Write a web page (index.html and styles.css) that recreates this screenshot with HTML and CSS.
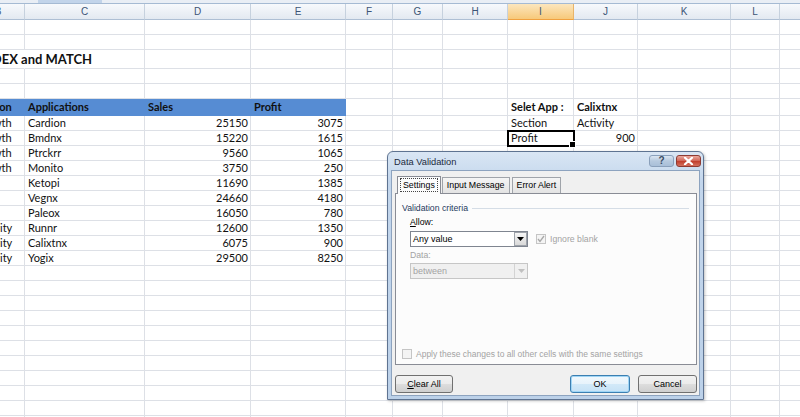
FILE: index.html
```html
<!DOCTYPE html>
<html>
<head>
<meta charset="utf-8">
<link rel="stylesheet" href="styles.css">
</head>
<body>
<div class="top"><div class="toptab"></div></div>
<div class="sheet">
  <div class="row colhead">
    <span>B</span><span>C</span><span>D</span><span>E</span><span>F</span><span>G</span><span>H</span><span class="cur">I</span><span>J</span><span>K</span><span>L</span><span>M</span>
  </div>
  <div class="row"><span></span><span></span><span></span><span></span><span></span><span></span><span></span><span></span><span></span><span></span><span></span><span></span></div>
  <div class="row"><span></span><span></span><span></span><span></span><span></span><span></span><span></span><span></span><span></span><span></span><span></span><span></span></div>
  <div class="row tall"><span class="title">INDEX and MATCH</span><span class="under"></span><span></span><span></span><span></span><span></span><span></span><span></span><span></span><span></span><span></span><span></span></div>
  <div class="row"><span></span><span></span><span></span><span></span><span></span><span></span><span></span><span></span><span></span><span></span><span></span><span></span></div>
  <div class="row"><span></span><span></span><span></span><span></span><span></span><span></span><span></span><span></span><span></span><span></span><span></span><span></span></div>
  <div class="row hrow"><span class="hd">Section</span><span class="hd">Applications</span><span class="hd">Sales</span><span class="hd">Profit</span><span></span><span></span><span></span><span class="b">Selet App :</span><span class="b">Calixtnx</span><span></span><span></span><span></span></div>
  <div class="row"><span>Growth</span><span>Cardion</span><span class="n">25150</span><span class="n">3075</span><span></span><span></span><span></span><span>Section</span><span>Activity</span><span></span><span></span><span></span></div>
  <div class="row"><span>Growth</span><span>Bmdnx</span><span class="n">15220</span><span class="n">1615</span><span></span><span></span><span></span><span class="sel">Profit</span><span class="n">900</span><span></span><span></span><span></span></div>
  <div class="row"><span>Growth</span><span>Ptrckrr</span><span class="n">9560</span><span class="n">1065</span><span></span><span></span><span></span><span></span><span></span><span></span><span></span><span></span></div>
  <div class="row"><span>Growth</span><span>Monito</span><span class="n">3750</span><span class="n">250</span><span></span><span></span><span></span><span></span><span></span><span></span><span></span><span></span></div>
  <div class="row"><span></span><span>Ketopi</span><span class="n">11690</span><span class="n">1385</span><span></span><span></span><span></span><span></span><span></span><span></span><span></span><span></span></div>
  <div class="row"><span></span><span>Vegnx</span><span class="n">24660</span><span class="n">4180</span><span></span><span></span><span></span><span></span><span></span><span></span><span></span><span></span></div>
  <div class="row"><span></span><span>Paleox</span><span class="n">16050</span><span class="n">780</span><span></span><span></span><span></span><span></span><span></span><span></span><span></span><span></span></div>
  <div class="row"><span>Activity</span><span>Runnr</span><span class="n">12600</span><span class="n">1350</span><span></span><span></span><span></span><span></span><span></span><span></span><span></span><span></span></div>
  <div class="row"><span>Activity</span><span>Calixtnx</span><span class="n">6075</span><span class="n">900</span><span></span><span></span><span></span><span></span><span></span><span></span><span></span><span></span></div>
  <div class="row"><span>Activity</span><span>Yogix</span><span class="n">29500</span><span class="n">8250</span><span></span><span></span><span></span><span></span><span></span><span></span><span></span><span></span></div>
  <div class="row"><span></span><span></span><span></span><span></span><span></span><span></span><span></span><span></span><span></span><span></span><span></span><span></span></div>
  <div class="row"><span></span><span></span><span></span><span></span><span></span><span></span><span></span><span></span><span></span><span></span><span></span><span></span></div>
  <div class="row"><span></span><span></span><span></span><span></span><span></span><span></span><span></span><span></span><span></span><span></span><span></span><span></span></div>
  <div class="row"><span></span><span></span><span></span><span></span><span></span><span></span><span></span><span></span><span></span><span></span><span></span><span></span></div>
  <div class="row"><span></span><span></span><span></span><span></span><span></span><span></span><span></span><span></span><span></span><span></span><span></span><span></span></div>
  <div class="row"><span></span><span></span><span></span><span></span><span></span><span></span><span></span><span></span><span></span><span></span><span></span><span></span></div>
  <div class="row"><span></span><span></span><span></span><span></span><span></span><span></span><span></span><span></span><span></span><span></span><span></span><span></span></div>
  <div class="row"><span></span><span></span><span></span><span></span><span></span><span></span><span></span><span></span><span></span><span></span><span></span><span></span></div>
  <div class="row"><span></span><span></span><span></span><span></span><span></span><span></span><span></span><span></span><span></span><span></span><span></span><span></span></div>
  <div class="row"><span></span><span></span><span></span><span></span><span></span><span></span><span></span><span></span><span></span><span></span><span></span><span></span></div>
  <div class="row"><span></span><span></span><span></span><span></span><span></span><span></span><span></span><span></span><span></span><span></span><span></span><span></span></div>
</div>

<div class="dlg">
  <div class="titlebar">
    <span class="ttl">Data Validation</span>
    <div class="tbtns">
      <span class="tb help">?</span>
      <span class="tb close"><svg width="11" height="8" viewBox="0 0 11 8"><path d="M2 0.8 L9 7.2 M9 0.8 L2 7.2" stroke="#fff" stroke-width="2.2" stroke-linecap="round"/></svg></span>
    </div>
  </div>
  <div class="client">
    <div class="tabs">
      <span class="tab active"><span class="focus">Settings</span></span>
      <span class="tab">Input Message</span>
      <span class="tab">Error Alert</span>
    </div>
    <div class="panel">
      <div class="group"><span>Validation criteria</span></div>
      <div class="lbl"><u>A</u>llow:</div>
      <div class="fieldrow">
        <div class="combo"><span class="val">Any value</span><span class="drop"><svg width="7" height="4" viewBox="0 0 7 4"><path d="M0 0 H7 L3.5 4 Z" fill="#000"/></svg></span></div>
        <div class="chk dis"><span class="box"><svg width="8" height="8" viewBox="0 0 8 8"><path d="M1 4 L3 6.5 L7 1" stroke="#a8a8a8" stroke-width="1.3" fill="none"/></svg></span>Ignore blank</div>
      </div>
      <div class="lbl dis">Data:</div>
      <div class="combo off"><span class="val">between</span><span class="drop"><svg width="7" height="4" viewBox="0 0 7 4"><path d="M0 0 H7 L3.5 4 Z" fill="#c0c0c0"/></svg></span></div>
      <div class="chk dis apply"><span class="box"></span>Apply these changes to all other cells with the same settings</div>
    </div>
    <div class="btns">
      <span class="btn"><u>C</u>lear All</span>
      <span class="spacer"></span>
      <span class="btn def">OK</span>
      <span class="btn">Cancel</span>
    </div>
  </div>
</div>
</body>
</html>
```

FILE: styles.css
```css
html, body {
  margin: 0;
  padding: 0;
}
body {
  width: 800px;
  height: 417px;
  overflow: hidden;
  background: #fff;
  font-family: Lato, "Liberation Sans", sans-serif;
  position: relative;
}
.top {
  height: 3px;
  background: #e9eef5;
  border-bottom: 1px solid #a5bad3;
}
.toptab {
  margin-left: 38px;
  width: 64px;
  height: 3px;
  background: #c2d4ea;
}
.sheet {
  margin-left: -28px;
  width: 900px;
}
.row {
  display: grid;
  grid-template-columns: 53px 120px 106px 95px 47px 50px 65px 66px 64px 93px 49px 60px;
  height: 15px;
}
.row > span {
  box-sizing: border-box;
  border-right: 1px solid #dde0e6;
  border-bottom: 1px solid #dde0e6;
  font-size: 11px;
  line-height: 14px;
  padding: 0 3px;
  color: #111;
  white-space: nowrap;
  overflow: hidden;
}
.row.tall { height: 19px; }
.row.hrow { height: 17px; }
.row.hrow > span { line-height: 16px; }
.row.tall > span { line-height: 18px; }
.colhead { height: 16px; }
.colhead > span {
  background: linear-gradient(#f7f9fc, #e3e9f1);
  border-right: 1px solid #c6d1de;
  border-bottom: 1px solid #aebfd4;
  text-align: center;
  font-size: 10px;
  line-height: 15px;
  color: #3c5476;
  font-family: "Liberation Sans", sans-serif;
}
.colhead > span.cur {
  background: linear-gradient(#fce6be, #f7c97a);
  border-bottom: 1px solid #f0a140;
  border-right-color: #e8b46a;
}
.row > span.title {
  overflow: visible;
  font-size: 13px;
  font-weight: 700;
  border-right-color: transparent;
  position: relative;
  z-index: 1;
  padding-left: 6px;
}
.row > span.hd {
  background: #568cd3;
  border-color: #568cd3;
  font-weight: 700;
}
.row > span.b { font-weight: 700; }
.row > span.n { text-align: right; padding-right: 2px; }
.row > span.sel {
  position: relative;
  overflow: visible;
  outline: 2px solid #000;
  outline-offset: -1px;
}
.row > span.sel::after {
  content: "";
  position: absolute;
  right: -3px;
  bottom: -3px;
  width: 5px;
  height: 5px;
  background: #000;
  border: 1px solid #fff;
}

/* dialog */
.dlg {
  position: absolute;
  left: 387px;
  top: 151px;
  width: 317px;
  height: 249px;
  box-sizing: border-box;
  border: 1px solid #5e7391;
  border-radius: 6px 6px 0 0;
  background: linear-gradient(#d9e6f4, #c3d6ec 30px, #bcd1e9);
  padding: 0 3px 3px;
  display: flex;
  flex-direction: column;
  font-family: "Liberation Sans", Arial, sans-serif;
  font-size: 9px;
  color: #000;
  box-shadow: 1px 1px 3px rgba(0,0,0,0.25);
}
.titlebar {
  height: 18px;
  display: flex;
  align-items: center;
  justify-content: space-between;
}
.ttl {
  padding-left: 3px;
  font-size: 9.3px;
  color: #1b2a3d;
  padding-top: 2px;
}
.tbtns {
  display: flex;
  gap: 2px;
  margin-right: -1px;
}
.tb {
  width: 25px;
  height: 12px;
  box-sizing: border-box;
  border-radius: 3px;
  display: flex;
  align-items: center;
  justify-content: center;
}
.help {
  border: 1px solid #8aa0bb;
  background: linear-gradient(#dbe6f2, #b6c9de 50%, #a9bfd8);
  color: #394b62;
  font-size: 10px;
  font-weight: 700;
  line-height: 10px;
}
.close {
  border: 1px solid #8d3b33;
  background: linear-gradient(#eaa99e, #d26a5c 45%, #c2412f 55%, #d3715f);
}
.client {
  flex: 1;
  background: #f0f0f0;
  border: 1px solid #8da3bf;
  padding: 5px 2px 0 3px;
  display: flex;
  flex-direction: column;
}
.tabs {
  display: flex;
  align-items: flex-end;
  padding-left: 2px;
  height: 17px;
  position: relative;
  z-index: 1;
}
.tab {
  box-sizing: border-box;
  height: 16px;
  border: 1px solid #a0a4aa;
  border-bottom: none;
  background: linear-gradient(#f5f5f5, #e3e3e3);
  padding: 0 4px;
  line-height: 15px;
  margin-right: 2px;
  font-size: 8.8px;
}
.tab.active {
  height: 18px;
  background: #fcfcfc;
  border-color: #898c95;
  padding: 1px 2px 0;
  margin-right: 1px;
  margin-bottom: -1px;
}
.focus {
  display: inline-block;
  border: 1px dotted #444;
  padding: 0 2px;
  line-height: 12px;
}
.panel {
  box-sizing: border-box;
  height: 172px;
  border: 1px solid #898c95;
  background: #fcfcfc;
  padding: 8px 7px 4px 6px;
  display: flex;
  flex-direction: column;
  font-size: 8.7px;
}
.group {
  display: flex;
  align-items: center;
  height: 12px;
  color: #1e3a5c;
}
.group::after {
  content: "";
  flex: 1;
  height: 1px;
  background: #d5dde6;
  margin-left: 4px;
}
.lbl {
  margin-top: 2px;
  height: 12px;
  line-height: 12px;
  padding-left: 8px;
}
.dis { color: #a3a3a3; }
.fieldrow {
  margin-top: 3px;
  display: flex;
  align-items: center;
  padding-left: 8px;
}
.combo {
  box-sizing: border-box;
  width: 118px;
  height: 16px;
  border: 1px solid #7f8590;
  background: #fff;
  display: flex;
  align-items: stretch;
  font-size: 9px;
}
.combo .val {
  flex: 1;
  line-height: 14px;
  padding-left: 2px;
}
.drop {
  width: 13px;
  box-sizing: border-box;
  border: 1px solid #9ea3aa;
  background: linear-gradient(#f6f6f6, #d9d9d9);
  display: flex;
  align-items: center;
  justify-content: center;
}
.combo.off {
  margin-top: 2px;
  margin-left: 8px;
  background: #f0f0f0;
  border-color: #c6c6c6;
  color: #a3a3a3;
}
.combo.off .drop {
  background: #f0f0f0;
  border-color: #d3d3d3;
  border-width: 0 0 0 1px;
}
.chk {
  display: flex;
  align-items: center;
  margin-left: 8px;
}
.box {
  width: 10px;
  height: 10px;
  box-sizing: border-box;
  border: 1px solid #c5c5c5;
  background: #f4f4f4;
  margin-right: 4px;
  display: flex;
  align-items: center;
  justify-content: center;
}
.apply {
  margin-top: auto;
  margin-left: 0;
  height: 12px;
  font-size: 8.5px;
}
.btns {
  margin-top: 10px;
  display: flex;
  gap: 8px;
}
.spacer { flex: 1; }
.btn {
  box-sizing: border-box;
  width: 59px;
  height: 18px;
  border: 1px solid #707070;
  border-radius: 3px;
  background: linear-gradient(#f2f2f2, #ebebeb 50%, #dddddd 51%, #cfcfcf);
  text-align: center;
  line-height: 16px;
  font-size: 9px;
}
.btn:first-child { width: 58px; }
.btn.def {
  width: 60px;
  border-color: #3c7fb1;
  background: linear-gradient(#f1f8fd, #e7f3fb 50%, #d2e9f8 51%, #c6e2f6);
  box-shadow: inset 0 0 0 1px #9fd5f5;
}
```
